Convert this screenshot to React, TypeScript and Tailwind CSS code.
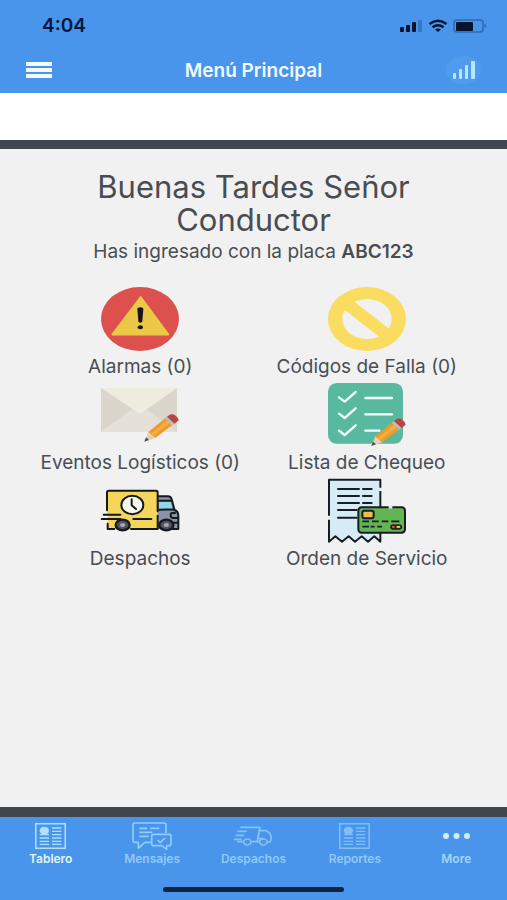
import type { ReactNode } from "react";

function Art({ children }: { children: ReactNode }) {
  return (
    <svg viewBox="0 0 234 192" className="h-16 w-[78px] overflow-visible" aria-hidden="true">
      {children}
    </svg>
  );
}

function Pencil() {
  return (
    <g>
      <path d="M130 176l12-29 21 18z" fill="#e8cfae" />
      <path d="M130 176l5-13 9 8z" fill="#46505a" />
      <path d="M142 147l56-46 23 20-58 44z" fill="#ee9b2d" />
      <path d="M149 153l56-46 8 7-57 45z" fill="#f6ad45" />
      <path d="M191 107l8-6 22 20-8 6z" fill="#b9bdc0" />
      <path d="M198 101l8-6q9-4 18 3t9 14l-12 10z" fill="#ba4441" />
    </g>
  );
}

function AlarmArt() {
  return (
    <Art>
      <ellipse cx="117" cy="96" rx="117" ry="96" fill="#dc514e" />
      <path d="M119 31l82 111H35z" fill="#ebc947" stroke="#ebc947" strokeWidth="7" strokeLinejoin="round" />
      <path d="M109 66q0-5 9-5t9 5l-3 37q-1 4-6 4t-6-4z" fill="#171512" />
      <ellipse cx="118" cy="121" rx="8" ry="6" fill="#171512" />
    </Art>
  );
}

function ForbiddenArt() {
  return (
    <Art>
      <ellipse cx="117" cy="96" rx="117" ry="96" fill="#f9dc60" />
      <ellipse cx="117" cy="96" rx="74" ry="60" fill="#f1f1f2" />
      <path d="M52 46l130 102" stroke="#f9dc60" strokeWidth="37" />
    </Art>
  );
}

function EnvelopeArt() {
  return (
    <Art>
      <path d="M0 15h228v132H0z" fill="#dad6cd" />
      <path d="M0 147l98-72h34l96 72z" fill="#e5e1d8" />
      <path d="M0 15h228L122 89q-5 4-10 0z" fill="#eeecdf" />
      <Pencil />
    </Art>
  );
}

function ChecklistArt() {
  return (
    <Art>
      <rect width="225" height="182" rx="26" fill="#58b8a0" />
      <g fill="none" stroke="#f2fffb" strokeWidth="7" strokeLinecap="round" strokeLinejoin="round">
        <path d="M33 43l17 13 33-29M33 92l17 13 33-29M33 143l17 13 33-29" />
        <path d="M112 45h80M112 94h80M112 143h42" />
      </g>
      <g transform="translate(0 13)">
        <Pencil />
      </g>
    </Art>
  );
}

function TruckArt() {
  return (
    <Art>
      <path d="M18 35h152v115H18z" fill="#f6d55b" />
      <path d="M170 52h30q10 0 12 9l8 32q12 2 12 17v40h-62z" fill="#8b91a7" />
      <path d="M174 66h34l7 25h-41z" fill="#91d5e8" />
      <path d="M-2 103h22v26H-2z" fill="#f1f1f2" />
      <g fill="none" stroke="#15191e" strokeWidth="6" strokeLinecap="round" strokeLinejoin="round">
        <path d="M18 94V40q0-5 5-5h142q5 0 5 5v57M170 110v40M8 107h50M2 120h56M20 134v16h20M97 120h54M90 150h80" />
        <path d="M173 52h28q9 0 11 9l8 30-46 1M174 65h36M218 92q14 3 14 18v40h-18M222 102h-8q-5 0-5 7t6 8h12M215 131h16" />
        <ellipse cx="94" cy="78" rx="33" ry="28" fill="#f7f7f2" />
        <path d="M92 61v18l13 11" />
      </g>
      <g fill="#4f5260" stroke="#15191e" strokeWidth="7">
        <ellipse cx="65" cy="138" rx="21" ry="16" />
        <ellipse cx="196" cy="138" rx="21" ry="16" />
      </g>
      <ellipse cx="65" cy="138" rx="8" ry="6" fill="#a6a8b0" />
      <ellipse cx="196" cy="138" rx="8" ry="6" fill="#a6a8b0" />
    </Art>
  );
}

function ReceiptArt() {
  return (
    <Art>
      <path d="M3 2h154v186l-18-16-19 16-19-16-20 16-19-16-20 16-20-16-19 16z" fill="#d7ebf6" />
      <g fill="none" stroke="#171d24" strokeWidth="6" strokeLinejoin="round">
        <path d="M3 110V2h154v24M157 36v50M3 122v66l19-16 20 16 20-16 19 16 20-16 19 16 19-16 18 16v-26" />
        <path d="M30 30h63M105 30h26M30 51h63M105 51h26M30 72h63M105 72h26M30 93h56M30 116h56" strokeLinecap="round" />
        <rect x="91" y="85" width="140" height="76" rx="10" fill="#63b553" />
        <rect x="103" y="95" width="34" height="23" rx="6" fill="#efbb4c" />
        <path d="M103 127h20M132 127h20M161 127h20M190 127h24M103 143h20M128 143h12M148 143h14" strokeWidth="5" />
        <ellipse cx="198" cy="144" rx="9" ry="6" fill="#e25b50" strokeWidth="5" />
        <ellipse cx="211" cy="144" rx="9" ry="6" fill="#efbb4c" strokeWidth="5" />
      </g>
      <path d="M182 81h11v8h-11z" fill="#d7ebf6" />
    </Art>
  );
}

function NewsIcon() {
  return (
    <svg viewBox="0 0 93 78" className="h-[26px] w-[31px]" fill="none" stroke="currentColor" aria-hidden="true">
      <path d="M2 2h89v74H2z" strokeWidth="5" />
      <path d="M51 15h28M51 25h28M51 35h28M51 45h28M51 55h28M51 64h28M14 45h28M14 55h28M14 64h28M14 35h28" strokeWidth="4" />
      <ellipse cx="28" cy="23" rx="14" ry="12" fill="currentColor" stroke="none" />
    </svg>
  );
}

function ChatIcon() {
  return (
    <svg viewBox="0 0 120 84" className="h-7 w-10" fill="none" stroke="currentColor" strokeWidth="5" strokeLinejoin="round" aria-hidden="true">
      <path d="M57 61H39L19 78V61H8q-5 0-5-6V8q0-5 5-5h88q6 0 6 5v25" />
      <path d="M65 37h46q6 0 6 6v22q0 6-6 6h-7v11L89 71H65q-6 0-6-6V43q0-6 6-6z" />
      <path d="M22 19h24M54 19h28M22 31h39M22 43h28M77 54l8 8 14-14" />
    </svg>
  );
}

function VanIcon() {
  return (
    <svg viewBox="0 0 120 66" className="h-[22px] w-10" fill="none" stroke="currentColor" strokeWidth="5" strokeLinejoin="round" aria-hidden="true">
      <path d="M22 7h59l-9 43H55M13 19h28M8 31h25M3 43h23M29 50H12M80 17h19q17 8 16 23l-4 11h-8M79 24l-5 17h16M72 50h8" />
      <ellipse cx="43" cy="51" rx="11" ry="9" />
      <ellipse cx="91" cy="51" rx="11" ry="9" />
    </svg>
  );
}

function DotsIcon() {
  return (
    <svg viewBox="0 0 27 6" className="h-[6px] w-[27px] text-[#d3eeff]" fill="currentColor" aria-hidden="true">
      <circle cx="3" cy="3" r="3" />
      <circle cx="13.5" cy="3" r="3" />
      <circle cx="24" cy="3" r="3" />
    </svg>
  );
}

const options = [
  { label: "Alarmas (0)", art: <AlarmArt /> },
  { label: "Códigos de Falla (0)", art: <ForbiddenArt /> },
  { label: "Eventos Logísticos (0)", art: <EnvelopeArt /> },
  { label: "Lista de Chequeo", art: <ChecklistArt /> },
  { label: "Despachos", art: <TruckArt /> },
  { label: "Orden de Servicio", art: <ReceiptArt /> },
];

const tabs = [
  { label: "Tablero", icon: <NewsIcon />, tone: "text-[#e3f4ff]", iconTone: "text-[#b2e1ff]" },
  { label: "Mensajes", icon: <ChatIcon />, tone: "text-[#91c9fa]", iconTone: "text-[#91cdfb]" },
  { label: "Despachos", icon: <VanIcon />, tone: "text-[#91c9fa]", iconTone: "text-[#86c2f8]" },
  { label: "Reportes", icon: <NewsIcon />, tone: "text-[#91c9fa]", iconTone: "text-[#82bff8]" },
  { label: "More", icon: <DotsIcon />, tone: "text-[#a3d4fb]", iconTone: "" },
];

export default function App() {
  return (
    <div className="flex min-h-screen flex-col bg-[#f1f1f2] font-['Inter','Liberation_Sans',sans-serif] text-[#494d52]">
      <header className="bg-[#4895eb]">
        <div className="flex h-[50px] items-center justify-between pt-0.5 pr-5 pl-[42px] text-[#06163b]">
          <span className="text-[19px] font-semibold">4:04</span>
          <svg viewBox="0 0 87 14" className="h-[14px] w-[87px]" aria-hidden="true">
            <g fill="#06142f">
              <rect x="0" y="8" width="4" height="5" rx="1" />
              <rect x="6" y="6" width="4" height="7" rx="1" />
              <rect x="12" y="3" width="4" height="10" rx="1" />
              <rect x="18" y="1" width="4" height="12" rx="1" fill="#3677c2" />
              <path d="M38 13l-3-2.4q3-2.2 6 0z" />
              <rect x="56" y="3" width="17" height="9" rx="1" />
            </g>
            <path d="M29.5 5q8.5-6.5 17 0M32.5 8.2q5.500-4 11 0" fill="none" stroke="#06142f" strokeWidth="2.400" />
            <rect x="54" y="1" width="29" height="12" rx="3" fill="none" stroke="#2d6bb2" strokeWidth="1.500" />
            <path d="M84.500 5v4q2-.5 2-2t-2-2" fill="#2d6bb2" />
          </svg>
        </div>
        <div className="grid h-[43px] grid-cols-[1fr_auto_1fr] items-center px-[26px] pb-1">
          <button aria-label="Abrir menú" className="flex w-[30px] flex-col gap-0.5">
            <span className="h-1 w-[26px] bg-[#f2faff]" />
            <span className="h-1 w-[26px] bg-[#f2faff]" />
            <span className="h-1 w-[26px] bg-[#f2faff]" />
          </button>
          <h1 className="pt-1 text-[19px] font-semibold text-[#f2faff]">Menú Principal</h1>
          <button aria-label="Señal" className="flex h-7 w-[35px] items-center justify-center justify-self-end rounded-[50%] bg-[#509bee]">
            <svg viewBox="0 0 22 18" className="h-[18px] w-[22px]" fill="#bce5ff" aria-hidden="true">
              <rect x="0" y="12" width="3" height="6" rx="1" />
              <rect x="6" y="8" width="3" height="10" rx="1" />
              <rect x="12" y="4" width="3" height="14" rx="1" />
              <rect x="18" y="0" width="4" height="18" rx="1" />
            </svg>
          </button>
        </div>
      </header>

      <div className="h-14 border-b-[9px] border-[#414550] bg-white" />

      <main className="flex-1 px-[27px] pt-[21px]">
        <div className="text-center">
          <h2 className="mx-auto max-w-[360px] text-[31px] leading-[33px]">Buenas Tardes Señor Conductor</h2>
          <p className="text-[19px] leading-8">
            Has ingresado con la placa <strong className="font-semibold">ABC123</strong>
          </p>
        </div>
        <div className="mt-[19px] grid grid-cols-2">
          {options.map((option) => (
            <button key={option.label} className="flex flex-col items-center">
              {option.art}
              <span className="text-[19px] leading-8 whitespace-nowrap">{option.label}</span>
            </button>
          ))}
        </div>
      </main>

      <footer className="border-t-[10px] border-[#414550] bg-[#4895eb]">
        <nav className="grid grid-cols-5 pt-1">
          {tabs.map((tab) => (
            <button key={tab.label} className="flex flex-col items-center">
              <span className={`flex h-[30px] items-center justify-center ${tab.iconTone}`}>{tab.icon}</span>
              <span className={`text-xs leading-4 font-semibold ${tab.tone}`}>{tab.label}</span>
            </button>
          ))}
        </nav>
        <div className="mx-auto mt-5 mb-2 h-[5px] w-[181px] rounded-full bg-[#13243c]" />
      </footer>
    </div>
  );
}
